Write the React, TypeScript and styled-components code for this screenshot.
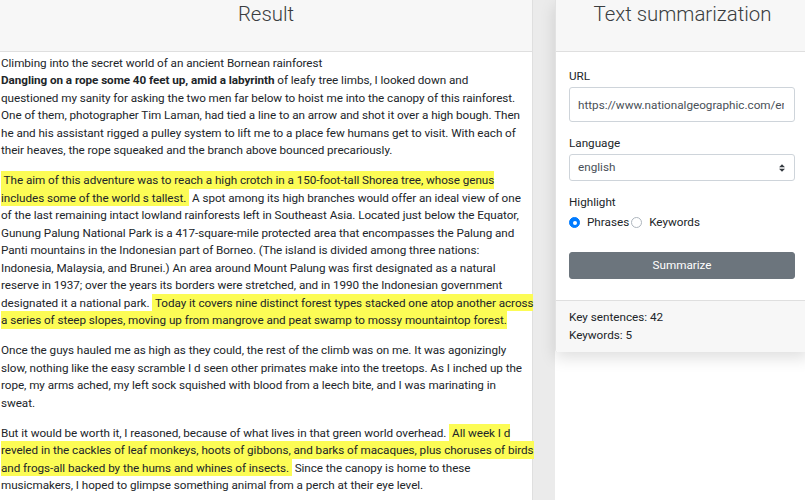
import styled, { createGlobalStyle } from "styled-components";

const GlobalStyle = createGlobalStyle`
  html, body {
    margin: 0;
    height: 100%;
    overflow: hidden;
  }
  body {
    background: #ffffff;
    color: #212529;
    font-family: Roboto, "Liberation Sans", sans-serif;
    font-size: 11.7px;
    line-height: 17.5px;
  }
`;

const Page = styled.div`
  display: grid;
  grid-template-columns: 533px 1fr;
  column-gap: 22px;
  height: 500px;
  background: #ebebeb;
`;

const Card = styled.section`
  background: #fff;
  border-right: 1px solid #dfdfdf;
`;

const CardHeader = styled.header`
  height: 52px;
  box-sizing: border-box;
  padding-top: 2px;
  background: #f7f7f7;
  border-bottom: 1px solid #dfdfdf;
  text-align: center;
`;

const Title = styled.h3`
  margin: 0;
  font-size: 20.4px;
  line-height: 25px;
  font-weight: 300;
  color: #3a3d40;
`;

const ResultBody = styled.div`
  padding: 2.5px 0 0 1px;
  letter-spacing: -0.05px;
`;

const Para = styled.p`
  margin: 0 0 12.5px;
`;

const Line = styled.span`
  display: block;
  white-space: pre;
`;

const Mark = styled.span`
  background: #fcfc55;
  padding: 2px 0 1.8px;
`;

const Strong = styled.b`
  font-weight: 700;
`;

const Side = styled.div`
  background: #fff;
`;

const FormCard = styled.section`
  width: 253px;
  background: #fff;
  border-radius: 0 0 3px 3px;
  box-shadow: 0 6px 16px rgba(0, 0, 0, 0.13);
  border-left: 1px solid #e2e2e2;
`;

const FormBody = styled.div`
  padding: 16px 14px 20.7px 13px;
`;

const Group = styled.div`
  margin-bottom: 13px;
`;

const Label = styled.label`
  display: block;
  margin-bottom: 1.5px;
  color: #212529;
`;

const Input = styled.input`
  display: block;
  box-sizing: border-box;
  width: 100%;
  height: 35px;
  padding: 0 10px 0 8px;
  border: 1px solid #ced4da;
  border-radius: 3px;
  font: inherit;
  color: #495057;
  background: #fff;
  outline: none;
`;

const SelectBox = styled.div`
  display: flex;
  align-items: center;
  justify-content: space-between;
  box-sizing: border-box;
  height: 27px;
  padding: 0 9px 0 8px;
  border: 1px solid #ced4da;
  border-radius: 3px;
  color: #495057;
`;

const RadioRow = styled.div`
  display: flex;
  align-items: center;
  height: 17.5px;
  margin-top: 2.5px;
`;

const RadioOption = styled.label`
  display: flex;
  align-items: center;
  gap: 7px;
  margin-right: 2px;
`;

const RadioDot = styled.span<{ $checked?: boolean }>`
  box-sizing: border-box;
  width: 11px;
  height: 11px;
  border-radius: 50%;
  border: 1px solid ${(p) => (p.$checked ? "#007bff" : "#adb5bd")};
  background: ${(p) => (p.$checked ? "#007bff" : "#fff")};
  display: flex;
  align-items: center;
  justify-content: center;
  &::after {
    content: "";
    width: 4px;
    height: 4px;
    border-radius: 50%;
    background: ${(p) => (p.$checked ? "#fff" : "transparent")};
  }
`;

const Button = styled.button`
  display: block;
  width: 100%;
  height: 27px;
  margin-top: 20.8px;
  border: 1px solid #6c757d;
  border-radius: 3px;
  background: #6c757d;
  color: #fff;
  font: inherit;
  cursor: pointer;
`;

const Footer = styled.footer`
  padding: 8.25px 13px 8.2px;
  background: #f7f7f7;
  border-top: 1px solid #dfdfdf;
  border-radius: 0 0 3px 3px;
`;

type Seg = string | { t: string; hl?: boolean; b?: boolean };

const hl = (t: string): Seg => ({ t, hl: true });
const bold = (t: string): Seg => ({ t, b: true });

// the article, line by line as in the summarizer output
const article: Seg[][][] = [
  [["Climbing into the secret world of an ancient Bornean rainforest"]],
  [
    [bold("Dangling on a rope some 40 feet up, amid a labyrinth"), " of leafy tree limbs, I looked down and"],
    ["questioned my sanity for asking the two men far below to hoist me into the canopy of this rainforest."],
    ["One of them, photographer Tim Laman, had tied a line to an arrow and shot it over a high bough. Then"],
    ["he and his assistant rigged a pulley system to lift me to a place few humans get to visit. With each of"],
    ["their heaves, the rope squeaked and the branch above bounced precariously."],
  ],
  [
    [hl(" The aim of this adventure was to reach a high crotch in a 150-foot-tall Shorea tree, whose genus")],
    [hl("includes some of the world s tallest. "), " A spot among its high branches would offer an ideal view of one"],
    ["of the last remaining intact lowland rainforests left in Southeast Asia. Located just below the Equator,"],
    ["Gunung Palung National Park is a 417-square-mile protected area that encompasses the Palung and"],
    ["Panti mountains in the Indonesian part of Borneo. (The island is divided among three nations:"],
    ["Indonesia, Malaysia, and Brunei.) An area around Mount Palung was first designated as a natural"],
    ["reserve in 1937; over the years its borders were stretched, and in 1990 the Indonesian government"],
    ["designated it a national park. ", hl(" Today it covers nine distinct forest types stacked one atop another across")],
    [hl("a series of steep slopes, moving up from mangrove and peat swamp to mossy mountaintop forest.")],
  ],
  [
    ["Once the guys hauled me as high as they could, the rest of the climb was on me. It was agonizingly"],
    ["slow, nothing like the easy scramble I d seen other primates make into the treetops. As I inched up the"],
    ["rope, my arms ached, my left sock squished with blood from a leech bite, and I was marinating in"],
    ["sweat."],
  ],
  [
    ["But it would be worth it, I reasoned, because of what lives in that green world overhead. ", hl(" All week I d")],
    [hl("reveled in the cackles of leaf monkeys, hoots of gibbons, and barks of macaques, plus choruses of birds")],
    [hl("and frogs-all backed by the hums and whines of insects. "), " Since the canopy is home to these"],
    ["musicmakers, I hoped to glimpse something animal from a perch at their eye level."],
  ],
];

const renderSeg = (s: Seg, i: number) => {
  if (typeof s === "string") return s;
  if (s.hl) return <Mark key={i}>{s.t}</Mark>;
  if (s.b) return <Strong key={i}>{s.t}</Strong>;
  return s.t;
};

const SortIcon = () => (
  <svg width="6" height="8" viewBox="0 0 4 5" aria-hidden="true">
    <path d="M2 0L0 2h4zm0 5L0 3h4z" fill="#343a40" />
  </svg>
);

export default function App() {
  return (
    <>
      <GlobalStyle />
      <Page>
        <Card>
          <CardHeader>
            <Title>Result</Title>
          </CardHeader>
          <ResultBody>
            {article.map((para, pi) => {
              const lines = para.map((line, li) => <Line key={li}>{line.map(renderSeg)}</Line>);
              return pi === 0 ? <div key={pi}>{lines}</div> : <Para key={pi}>{lines}</Para>;
            })}
          </ResultBody>
        </Card>
        <Side>
          <FormCard>
            <CardHeader>
              <Title>Text summarization</Title>
            </CardHeader>
            <FormBody>
              <Group>
                <Label htmlFor="url">URL</Label>
                <Input id="url" defaultValue="https://www.nationalgeographic.com/environment/article/borneo" />
              </Group>
              <Group>
                <Label>Language</Label>
                <SelectBox>
                  <span>english</span>
                  <SortIcon />
                </SelectBox>
              </Group>
              <Label>Highlight</Label>
              <RadioRow>
                <RadioOption>
                  <RadioDot $checked />
                  Phrases
                </RadioOption>
                <RadioOption>
                  <RadioDot />
                  Keywords
                </RadioOption>
              </RadioRow>
              <Button>Summarize</Button>
            </FormBody>
            <Footer>
              <div>Key sentences: 42</div>
              <div>Keywords: 5</div>
            </Footer>
          </FormCard>
        </Side>
      </Page>
    </>
  );
}
